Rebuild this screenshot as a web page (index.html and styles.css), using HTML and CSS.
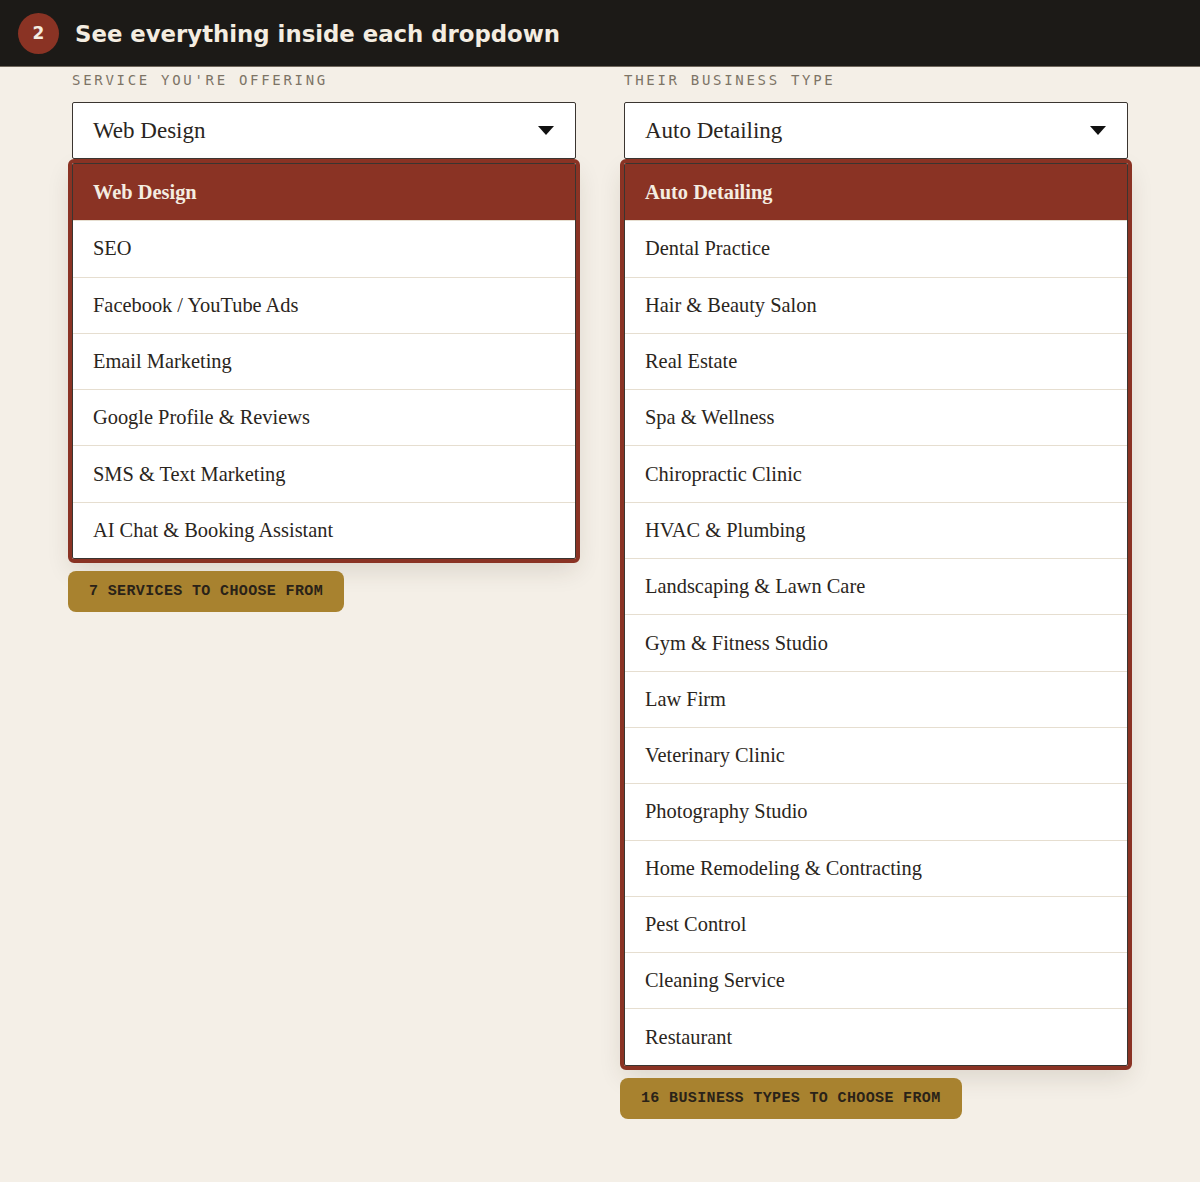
FILE: index.html
```html
<!DOCTYPE html>
<html lang="en">
<head>
    <meta charset="UTF-8">
    <meta name="viewport" content="width=device-width, initial-scale=1.0">
    <title>Dropdown Options</title>
    <link rel="stylesheet" href="styles.css">
</head>
<body>
    <header class="step-bar">
        <span class="step-num">2</span>
        <h2>See everything inside each dropdown</h2>
    </header>

    <main class="columns">
        <section class="field">
            <p class="field-label">SERVICE YOU'RE OFFERING</p>
            <div class="select-box">
                <span>Web Design</span>
                <svg class="caret" width="16" height="9" viewBox="0 0 16 9"><path d="M0 0h16L8 9z" fill="#111"/></svg>
            </div>
            <ul class="listbox">
                <li class="selected">Web Design</li>
                <li>SEO</li>
                <li>Facebook / YouTube Ads</li>
                <li>Email Marketing</li>
                <li>Google Profile &amp; Reviews</li>
                <li>SMS &amp; Text Marketing</li>
                <li>AI Chat &amp; Booking Assistant</li>
            </ul>
            <span class="count-pill">7 SERVICES TO CHOOSE FROM</span>
        </section>

        <section class="field">
            <p class="field-label">THEIR BUSINESS TYPE</p>
            <div class="select-box">
                <span>Auto Detailing</span>
                <svg class="caret" width="16" height="9" viewBox="0 0 16 9"><path d="M0 0h16L8 9z" fill="#111"/></svg>
            </div>
            <ul class="listbox">
                <li class="selected">Auto Detailing</li>
                <li>Dental Practice</li>
                <li>Hair &amp; Beauty Salon</li>
                <li>Real Estate</li>
                <li>Spa &amp; Wellness</li>
                <li>Chiropractic Clinic</li>
                <li>HVAC &amp; Plumbing</li>
                <li>Landscaping &amp; Lawn Care</li>
                <li>Gym &amp; Fitness Studio</li>
                <li>Law Firm</li>
                <li>Veterinary Clinic</li>
                <li>Photography Studio</li>
                <li>Home Remodeling &amp; Contracting</li>
                <li>Pest Control</li>
                <li>Cleaning Service</li>
                <li>Restaurant</li>
            </ul>
            <span class="count-pill">16 BUSINESS TYPES TO CHOOSE FROM</span>
        </section>
    </main>
</body>
</html>
```

FILE: styles.css
```css
body {
    margin: 0;
    background-color: #f4efe7;
    font-family: "Liberation Serif", serif;
    color: #2a2520;
}

.step-bar {
    display: flex;
    align-items: center;
    gap: 16px;
    height: 67px;
    padding: 0 18px;
    background-color: #1c1a17;
    border-bottom: 1px solid #6f675c;
    box-sizing: border-box;
}

.step-num {
    display: flex;
    align-items: center;
    justify-content: center;
    width: 41px;
    height: 41px;
    border-radius: 50%;
    background-color: #8a3324;
    color: #f4ede1;
    font-family: "DejaVu Sans", sans-serif;
    font-weight: bold;
    font-size: 17px;
}

.step-bar h2 {
    margin: 2px 0 0;
    color: #f4ede1;
    font-family: "DejaVu Sans", sans-serif;
    font-size: 22.8px;
    font-weight: bold;
}

.columns {
    display: grid;
    grid-template-columns: 504px 504px;
    gap: 48px;
    padding: 0 72px;
}

.field {
    display: flex;
    flex-direction: column;
    align-items: flex-start;
}

.field-label {
    margin: 5px 0 14px;
    font-family: "DejaVu Sans Mono", monospace;
    font-size: 14px;
    letter-spacing: 2.7px;
    color: #7d7466;
}

.select-box {
    display: flex;
    align-items: center;
    justify-content: space-between;
    width: 100%;
    height: 57px;
    padding: 0 21px 0 20px;
    box-sizing: border-box;
    background: #fff;
    border: 1px solid #3a3530;
    border-radius: 2px;
    font-size: 23px;
}

.listbox {
    list-style: none;
    width: 100%;
    margin: 4px 0 0;
    padding: 0;
    box-sizing: border-box;
    background: #fff;
    border: 1px solid #3a3530;
    border-radius: 2px;
    outline: 4px solid #8a3324;
    box-shadow: 0 10px 26px rgba(60, 40, 20, 0.14);
}

.listbox li {
    display: flex;
    align-items: center;
    height: 56.3px;
    padding: 0 20px;
    box-sizing: border-box;
    border-top: 1px solid #e6ded0;
    font-size: 20.4px;
}

.listbox li:first-child {
    border-top: none;
}

.listbox li.selected {
    background-color: #8a3324;
    color: #f4ede1;
    font-weight: bold;
}

.count-pill {
    margin: 12px 0 0 -4px;
    padding: 12px 21px;
    background-color: #a8822f;
    border-radius: 8px;
    font-family: "Liberation Mono", monospace;
    font-weight: bold;
    font-size: 15px;
    letter-spacing: 0.36px;
    color: #2a2218;
}
```
